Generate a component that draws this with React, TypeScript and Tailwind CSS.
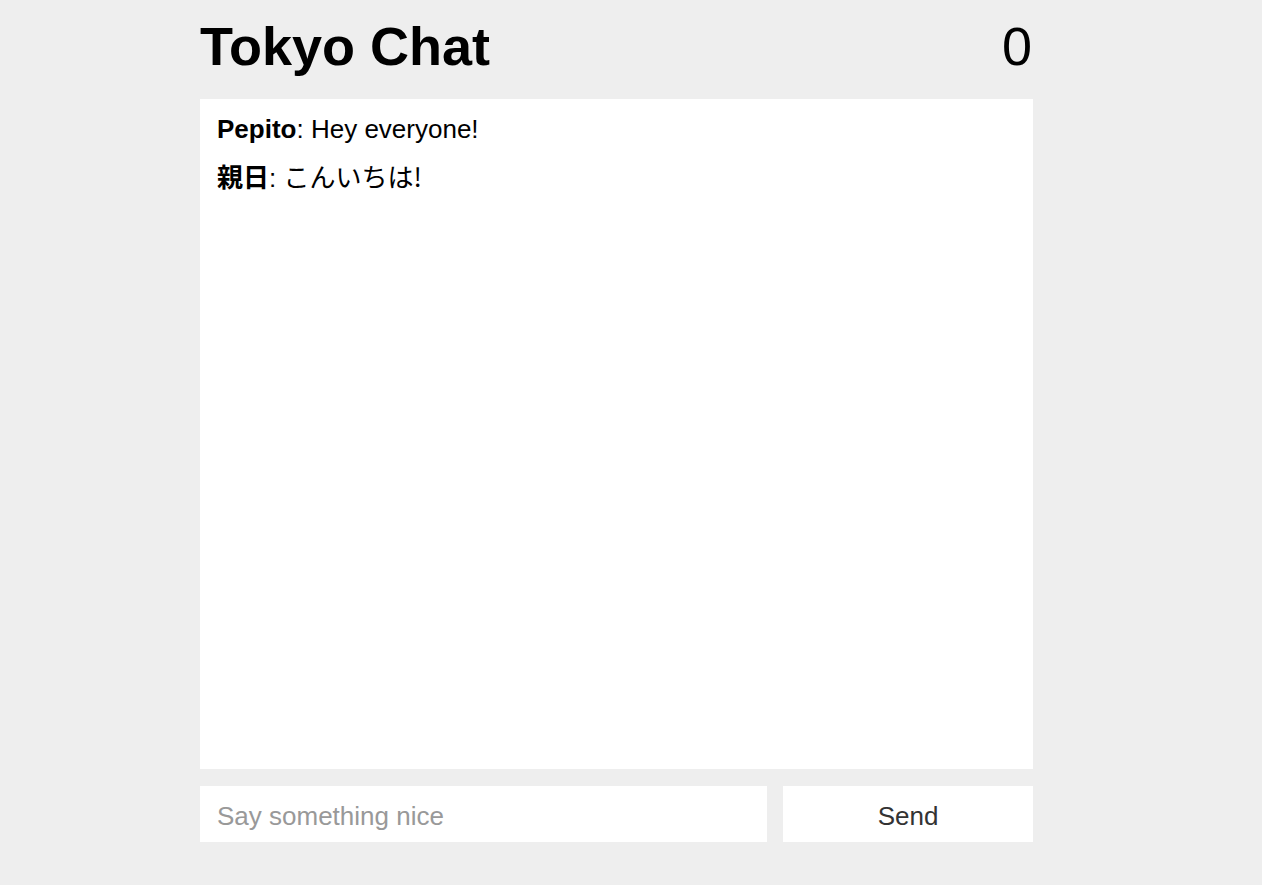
import { useState } from 'react';

interface Message {
  user: string;
  text: string;
  cjk?: boolean;
}

const initialMessages: Message[] = [
  { user: 'Pepito', text: 'Hey everyone!' },
  { user: '親日', text: 'こんいちは!', cjk: true },
];

export default function App() {
  const [messages] = useState<Message[]>(initialMessages);
  const [draft, setDraft] = useState('');

  return (
    <div
      className="min-h-screen bg-[#eeeeee] text-black"
      style={{ fontFamily: '"Liberation Sans", "Noto Sans CJK JP", sans-serif' }}
    >
      <div className="w-[833px] ml-[200px] pt-[14px]">
        <div className="flex items-start justify-between mb-[21px] leading-[64px]">
          <h1 className="text-[54px] font-bold">Tokyo Chat</h1>
          <span className="text-[54px] pr-[1px]">0</span>
        </div>

        <div className="bg-white h-[670px] px-[17px] pt-[15px]">
          {messages.map((m, i) => (
            <p key={i} className="text-[26px] leading-[30px] mb-[17px]">
              <b>{m.user}</b>:{' '}
              <span className={m.cjk ? 'font-["Noto_Sans_CJK_JP",sans-serif]' : ''}>{m.text}</span>
            </p>
          ))}
        </div>

        <div className="flex gap-4 mt-[17px]">
          <input
            value={draft}
            onChange={(e) => setDraft(e.target.value)}
            placeholder="Say something nice"
            className="w-[567px] h-14 bg-white px-[17px] pt-1 text-[26px] outline-none placeholder:text-[#999999]"
          />
          <button className="flex-1 h-14 bg-white pt-1 text-[26px] text-[#333333]">Send</button>
        </div>
      </div>
    </div>
  );
}
